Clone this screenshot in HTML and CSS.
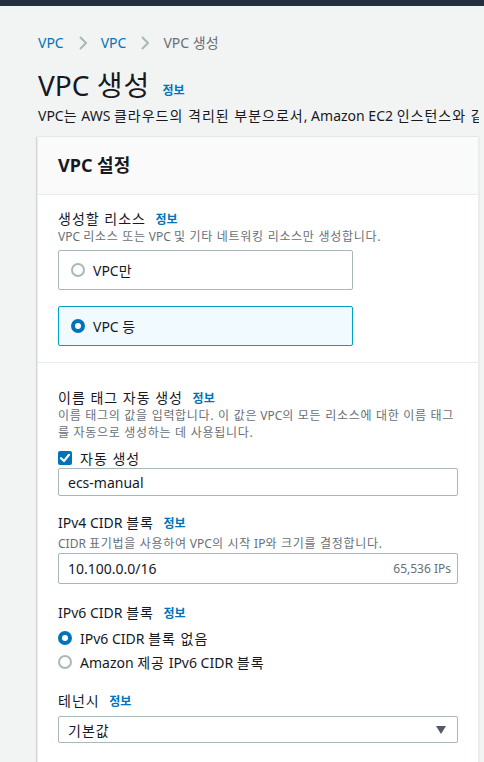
FILE: index.html
```html
<!DOCTYPE html>
<html lang="ko">
<head>
<meta charset="utf-8">
<title>VPC 생성</title>
<link rel="stylesheet" href="styles.css">
</head>
<body>
<div class="topbar"></div>
<div class="main">
  <nav class="breadcrumb">
    <a class="crumb-link">VPC</a>
    <svg class="crumb-sep" width="8" height="14" viewBox="0 0 8 14"><polyline points="1,1 7,7 1,13" fill="none" stroke="#aab7b8" stroke-width="2"/></svg>
    <a class="crumb-link">VPC</a>
    <svg class="crumb-sep" width="8" height="14" viewBox="0 0 8 14"><polyline points="1,1 7,7 1,13" fill="none" stroke="#aab7b8" stroke-width="2"/></svg>
    <span class="crumb-current">VPC 생성</span>
  </nav>
  <h1 class="page-title">VPC <span class="ko">생성</span> <a class="info info-title">정보</a></h1>
  <p class="page-desc">VPC<span class="ko">는</span> AWS <span class="ko">클라우드의 격리된 부분으로서</span>, Amazon EC2 <span class="ko">인스턴스와 같은</span> AWS <span class="ko">객체로 채워집니다</span>.</p>

  <section class="card">
    <header class="card-header">VPC 설정</header>

    <div class="card-section section-first">
      <div class="label"><span class="ko">생성할 리소스</span> <a class="info">정보</a></div>
      <div class="desc">VPC <span class="ko">리소스 또는</span> VPC <span class="ko">및 기타 네트워킹 리소스만 생성합니다</span>.</div>
      <div class="tiles">
        <div class="tile">
          <span class="radio"></span>
          <span class="tile-text">VPC만</span>
        </div>
        <div class="tile tile-selected">
          <span class="radio radio-on"></span>
          <span class="tile-text">VPC 등</span>
        </div>
      </div>
    </div>

    <div class="card-section section-second">
      <div class="label"><span class="ko">이름 태그 자동 생성</span> <a class="info">정보</a></div>
      <div class="desc desc-wrap"><span class="ko">이름 태그의 값을 입력합니다. 이 값은</span> VPC<span class="ko">의 모든 리소스에 대한 이름 태그를 자동으로 생성하는 데 사용됩니다</span>.</div>
      <div class="check-row">
        <span class="checkbox">
          <svg width="14" height="14" viewBox="0 0 14 14"><polyline points="3,7.2 6,10 11,3.8" fill="none" stroke="#fff" stroke-width="2.2" stroke-linecap="round" stroke-linejoin="round"/></svg>
        </span>
        <span class="check-text ko">자동 생성</span>
      </div>
      <div class="input input-name">ecs-manual</div>

      <div class="label label-gap">IPv4 CIDR <span class="ko">블록</span> <a class="info">정보</a></div>
      <div class="desc desc-ipv4">CIDR <span class="ko">표기법을 사용하여</span> VPC<span class="ko">의 시작</span> IP<span class="ko">와 크기를 결정합니다</span>.</div>
      <div class="input input-cidr">
        <span>10.100.0.0/16</span>
        <span class="input-hint">65,536 IPs</span>
      </div>

      <div class="label label-gap2">IPv6 CIDR <span class="ko">블록</span> <a class="info">정보</a></div>
      <div class="radio-list">
        <div class="radio-row"><span class="radio radio-on"></span><span>IPv6 CIDR <span class="ko">블록 없음</span></span></div>
        <div class="radio-row"><span class="radio"></span><span>Amazon <span class="ko">제공</span> IPv6 CIDR <span class="ko">블록</span></span></div>
      </div>

      <div class="label label-gap3"><span class="ko">테넌시</span> <a class="info">정보</a></div>
      <div class="input select">
        <span class="ko">기본값</span>
        <svg class="caret" width="10" height="8" viewBox="0 0 10 8"><polygon points="0,0 10,0 5,8" fill="#545b64"/></svg>
      </div>
    </div>
  </section>
</div>
</body>
</html>
```

FILE: styles.css
```css
html, body {
  margin: 0;
  padding: 0;
  overflow: hidden;
}

body {
  background: #f2f3f3;
  font-family: "Noto Sans", "Noto Sans CJK KR", sans-serif;
  color: #16191f;
  font-size: 14px;
}

.ko {
  letter-spacing: 1px;
}

.topbar {
  height: 6px;
  background: #232f3e;
}

.main {
  padding: 27px 5px 0 37px;
}

.breadcrumb {
  display: flex;
  align-items: center;
  height: 20px;
  padding-left: 1px;
  font-size: 14px;
  line-height: 20px;
}

.crumb-link {
  color: #0073bb;
}

.crumb-sep {
  margin: 0 14px 0 15px;
}

.crumb-current {
  color: #687078;
}

.page-title {
  margin: 14px 0 0 0;
  padding-left: 1px;
  font-size: 28px;
  line-height: 36px;
  font-weight: 400;
  color: #16191f;
}

.info {
  color: #0073bb;
  font-size: 12px;
  line-height: 1;
  font-weight: 700;
  margin-left: 6px;
  letter-spacing: 0;
}

.info-title {
  margin-left: 5px;
  vertical-align: 1px;
}

.page-desc {
  margin: 3px 0 0 0;
  padding-left: 1px;
  font-size: 14px;
  line-height: 20px;
  white-space: nowrap;
  overflow: hidden;
}

.card {
  margin-top: 10px;
  background: #fff;
  border: 1px solid #eaeded;
  border-top-color: #e4e7e7;
  box-shadow: 0 1px 1px 0 rgba(0, 28, 36, 0.15), -1px 1px 1px 0 rgba(0, 28, 36, 0.1);
  padding-bottom: 200px;
}

.card-header {
  background: #fafafa;
  border-bottom: 1px solid #eaeded;
  padding: 16px 20px 17px 20px;
  font-size: 18px;
  line-height: 24px;
  font-weight: 700;
}

.card-section {
  padding: 0 20px;
}

.section-first {
  padding-top: 15px;
  padding-bottom: 16px;
  border-bottom: 1px solid #eaeded;
}

.section-second {
  padding-top: 26px;
}

.label {
  font-size: 14px;
  line-height: 18px;
}

.label .info {
  margin-left: 6px;
}

.desc {
  font-size: 12px;
  line-height: 17px;
  color: #687078;
}

.desc .ko {
  letter-spacing: 0.7px;
}

.desc-wrap {
  width: 400px;
}

.tiles {
  display: flex;
  flex-direction: column;
  gap: 16px;
  margin-top: 5px;
  width: 295px;
}

.tile {
  display: flex;
  align-items: center;
  gap: 8px;
  height: 38px;
  padding-left: 12px;
  border: 1px solid #aab7b8;
  border-radius: 2px;
  background: #fff;
}

.tile-selected {
  border-color: #00a1c9;
  background: #f1faff;
}

.radio {
  box-sizing: border-box;
  width: 14px;
  height: 14px;
  border-radius: 50%;
  border: 2px solid #aab7b8;
  background: #fff;
  flex: none;
}

.radio-on {
  border: 4px solid #0073bb;
}

.check-row {
  display: flex;
  align-items: center;
  gap: 8px;
  height: 20px;
  margin-top: 7px;
}

.checkbox {
  display: flex;
  width: 14px;
  height: 14px;
  border-radius: 2px;
  background: #0073bb;
}

.input {
  box-sizing: border-box;
  display: flex;
  align-items: center;
  justify-content: space-between;
  width: 400px;
  height: 28px;
  padding: 0 6px 0 9px;
  border: 1px solid #aab7b8;
  border-radius: 2px;
  background: #fff;
  font-size: 14px;
}

.input-cidr {
  height: 31px;
  margin-top: 1px;
}

.input-hint {
  font-size: 12px;
  color: #687078;
}

.label-gap {
  margin-top: 18px;
}

.desc-ipv4 {
  margin-top: 3px;
}

.label-gap2 {
  margin-top: 20px;
}

.radio-list {
  display: flex;
  flex-direction: column;
  gap: 4px;
  margin-top: 6px;
}

.radio-row {
  display: flex;
  align-items: center;
  gap: 8px;
  height: 20px;
}

.label-gap3 {
  margin-top: 20px;
}

.select {
  height: 27px;
  margin-top: 6px;
  padding-right: 11px;
}
```
